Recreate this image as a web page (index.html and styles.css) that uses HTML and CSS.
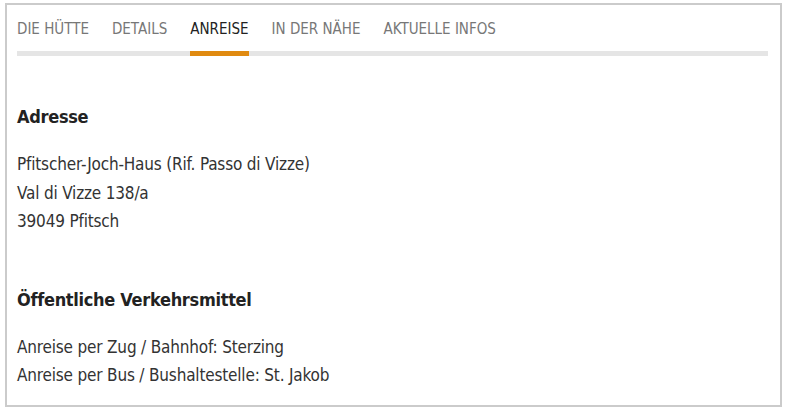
FILE: index.html
```html
<!DOCTYPE html>
<html lang="de">
  <head>
    <meta charset="UTF-8" />
    <meta name="viewport" content="width=device-width, initial-scale=1.0" />
    <title>Anreise</title>
    <link rel="stylesheet" href="styles.css">
  </head>
  <body>
    <div class="panel">
      <nav class="tabs">
        <a class="tab" href="#">Die Hütte</a>
        <a class="tab" href="#">Details</a>
        <a class="tab active" href="#">Anreise</a>
        <a class="tab" href="#">In der Nähe</a>
        <a class="tab" href="#">Aktuelle Infos</a>
      </nav>

      <section class="block">
        <h2>Adresse</h2>
        <p>
          Pfitscher-Joch-Haus (Rif. Passo di Vizze)<br>
          Val di Vizze 138/a<br>
          39049 Pfitsch
        </p>
      </section>

      <section class="block">
        <h2>Öffentliche Verkehrsmittel</h2>
        <p>
          Anreise per Zug / Bahnhof: Sterzing<br>
          Anreise per Bus / Bushaltestelle: St. Jakob
        </p>
      </section>
    </div>
  </body>
</html>
```

FILE: styles.css
```css
body {
  margin: 0;
  padding: 3px 3px 4px 5px;
  background: #fff;
  color: #333;
  font-family: "DejaVu Sans Condensed", "DejaVu Sans", sans-serif;
}

.panel {
  border: 2px solid #cbcbcb;
  height: 404px;
  padding: 0 12px 0 10px;
  box-sizing: border-box;
}

.tabs {
  display: flex;
  gap: 23px;
  padding-top: 13px;
  border-bottom: 5px solid #e5e5e5;
}

.tab {
  display: block;
  color: #777;
  text-decoration: none;
  text-transform: uppercase;
  font-size: 15px;
  line-height: 22px;
  padding-bottom: 11px;
  margin-bottom: -5px;
  border-bottom: 5px solid transparent;
}

.tab.active {
  color: #222;
  border-bottom-color: #e08a10;
}

.block {
  margin-top: 47px;
}

.block + .block {
  margin-top: 50px;
}

.block h2 {
  margin: 0;
  font-size: 18px;
  line-height: 28px;
  letter-spacing: -0.3px;
  color: #222;
}

.block p {
  margin: 19px 0 0;
  font-size: 17px;
  line-height: 28.5px;
  letter-spacing: -0.18px;
}
```
